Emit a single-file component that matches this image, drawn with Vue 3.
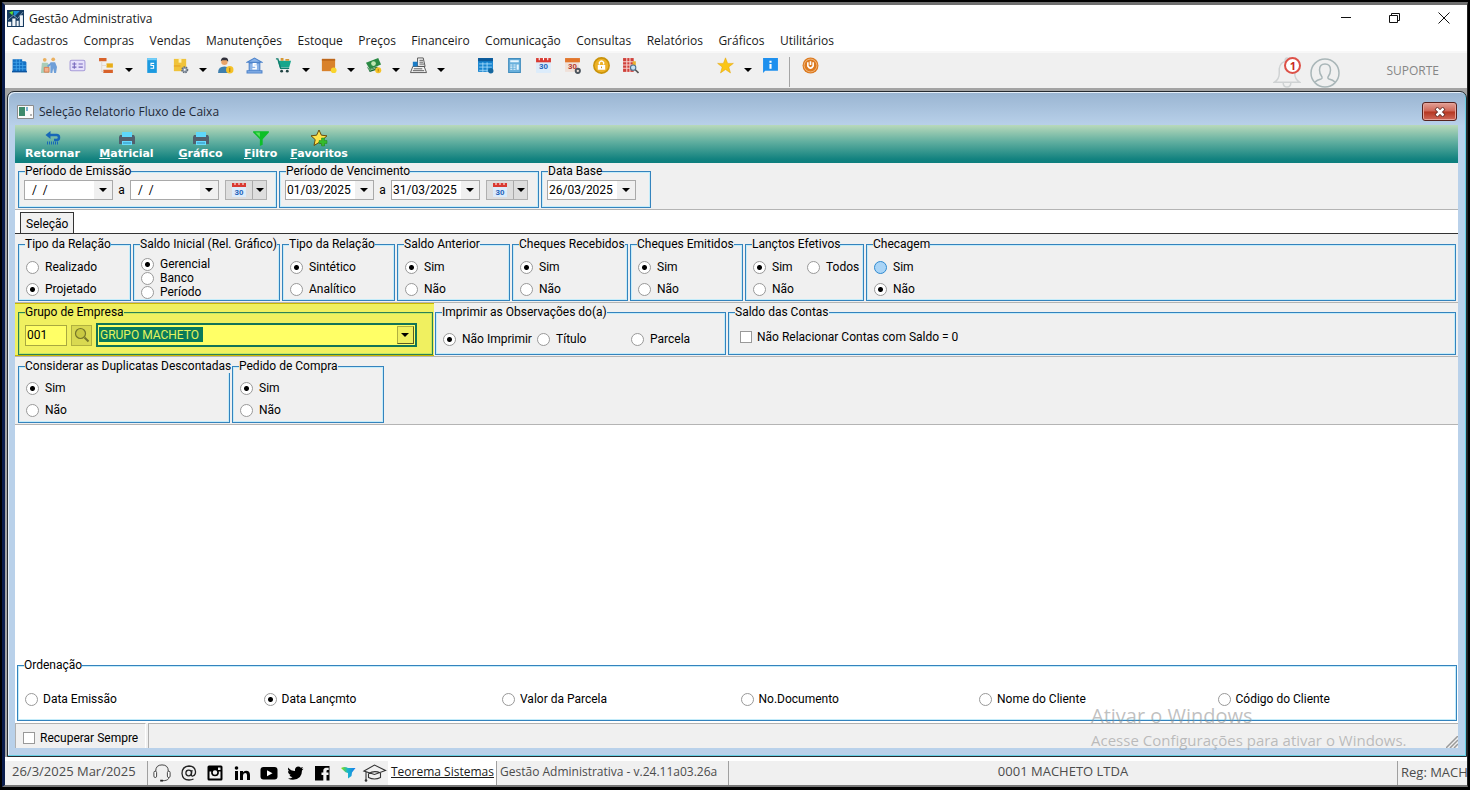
<script setup>
import { ref } from 'vue'

const menus = ['Cadastros', 'Compras', 'Vendas', 'Manutenções', 'Estoque', 'Preços', 'Financeiro', 'Comunicação', 'Consultas', 'Relatórios', 'Gráficos', 'Utilitários']

const toolGroups = [
  [
    { icon: 'building', label: 'Empresas' },
    { icon: 'people', label: 'Pessoas' },
    { icon: 'card', label: 'Cartões' },
    { icon: 'tree', label: 'Plano de contas', drop: true },
    { icon: 'ledger', label: 'Títulos' },
    { icon: 'box', label: 'Produtos', drop: true },
    { icon: 'client', label: 'Clientes' },
    { icon: 'bank', label: 'Bancos' },
    { icon: 'cart', label: 'Vendas', drop: true },
    { icon: 'package', label: 'Pedidos', drop: true },
    { icon: 'cash', label: 'Caixa', drop: true },
    { icon: 'register', label: 'Frente de caixa', drop: true }
  ],
  [
    { icon: 'agenda', label: 'Agenda' },
    { icon: 'calc', label: 'Calculadora' },
    { icon: 'cal', label: 'Calendário', num: 'blue' },
    { icon: 'calgear', label: 'Configurar calendário', num: 'red' },
    { icon: 'lock', label: 'Bloquear' },
    { icon: 'search-sheet', label: 'Pesquisar' }
  ],
  [
    { icon: 'star', label: 'Favoritos', drop: true },
    { icon: 'info', label: 'Informações' }
  ]
]

const actions = [
  { icon: 'back', key: '', text: 'Retornar' },
  { icon: 'print', key: 'M', text: 'atricial' },
  { icon: 'print', key: 'G', text: 'ráfico' },
  { icon: 'funnel', key: 'F', text: 'iltro', narrow: true },
  { icon: 'favadd', key: 'F', text: 'avoritos', narrow: true }
]

const periods = [
  { title: 'Período de Emissão', cls: 'w-emissao', dates: ['  /  /', '  /  /'] },
  { title: 'Período de Vencimento', cls: 'w-venc', dates: ['01/03/2025', '31/03/2025'] },
  { title: 'Data Base', cls: 'w-base', dates: ['26/03/2025'] }
]

const rowOne = ref([
  { id: 'tipo', title: 'Tipo da Relação', cls: 'w-a', options: ['Realizado', 'Projetado'], value: 'Projetado' },
  { id: 'saldo', title: 'Saldo Inicial (Rel. Gráfico)', cls: 'w-b tight', options: ['Gerencial', 'Banco', 'Período'], value: 'Gerencial' },
  { id: 'forma', title: 'Tipo da Relação', cls: 'w-a', options: ['Sintético', 'Analítico'], value: 'Sintético' },
  { id: 'anterior', title: 'Saldo Anterior', cls: 'w-a', options: ['Sim', 'Não'], value: 'Sim' },
  { id: 'recebidos', title: 'Cheques Recebidos', cls: 'w-c', options: ['Sim', 'Não'], value: 'Sim' },
  { id: 'emitidos', title: 'Cheques Emitidos', cls: 'w-a', options: ['Sim', 'Não'], value: 'Sim' },
  { id: 'efetivos', title: 'Lançtos Efetivos', cls: 'w-d pair', options: ['Sim', 'Todos', 'Não'], value: 'Sim' },
  { id: 'checagem', title: 'Checagem', cls: 'grow', options: ['Sim', 'Não'], value: 'Não', hot: 'Sim' }
])

const rowThree = ref([
  { id: 'duplicatas', title: 'Considerar as Duplicatas Descontadas', cls: 'w-dup', options: ['Sim', 'Não'], value: 'Sim' },
  { id: 'pedido', title: 'Pedido de Compra', cls: 'w-ped', options: ['Sim', 'Não'], value: 'Sim' }
])

const obs = ref('Não Imprimir')
const order = ref('Data Lançmto')
const orders = ['Data Emissão', 'Data Lançmto', 'Valor da Parcela', 'No.Documento', 'Nome do Cliente', 'Código do Cliente']
const group = ref('001')
const social = ['headset', 'at', 'instagram', 'linkedin', 'youtube', 'twitter', 'facebook', 'teorema', 'cap']
</script>

<template>
  <svg class="defs" aria-hidden="true">
    <defs>
      <linearGradient id="tgrad" x1="0" x2="1"><stop offset="0" stop-color="#8de000" /><stop offset=".45" stop-color="#19b8c8" /><stop offset="1" stop-color="#1878f0" /></linearGradient>
    </defs>
    <symbol id="i-building" viewBox="0 0 16 16"><path fill="#1471c4" d="M1.500 2h9v2h3l1 1v9h-13z" /><path stroke="#45a7ee" stroke-width=".7" d="M2 5h8M2 8h12M2 11h12M5 2v12M8 2v12M11 5v9" fill="none" /><path fill="#0c55a0" d="M1 13h14v1.500H1z" /></symbol>
    <symbol id="i-people" viewBox="0 0 18 18"><circle cx="5" cy="3" r="2" fill="#eab060" /><circle cx="14" cy="2.500" r="2" fill="#eab060" /><path fill="#a9cdb9" d="M2 6h6l2 3v8H1z" /><path fill="#6f9fd8" d="M11 5.500h5l2 5-1 6.500h-2l-1-5-1 5h-2z" /><path fill="#f3b08c" stroke="#d97e52" d="M4.500 11h5v5h-5z" /><path d="M8 10l4-3" stroke="#6f9fd8" stroke-width="2" /></symbol>
    <symbol id="i-card" viewBox="0 0 16 16"><rect x="1" y="3" width="14" height="10" rx="1.500" fill="#e6e0fb" stroke="#a79bd8" /><path stroke="#7767bb" d="M3 6.500h4M3 9.500h4M9 6.500h4M9 9.500h4M5 5v6" /></symbol>
    <symbol id="i-tree" viewBox="0 0 16 16"><path fill="#d8622a" d="M1 1h7v3H1zM5 12h9v3H5z" /><path fill="#e8ad18" d="M8 6h6v4H8z" /><path d="M3.500 4v9.500H5M3.500 8H8" fill="none" stroke="#e2d8d2" /></symbol>
    <symbol id="i-ledger" viewBox="0 0 16 16"><path fill="#1b9ae0" d="M4 1h9v14H4z" /><path fill="#74cef8" d="M4 1h9v2H4z" /><path d="M10.500 6H7.500v2H10v2.500H7" fill="none" stroke="#fff" /></symbol>
    <symbol id="i-box" viewBox="0 0 18 18"><path fill="#f0c33a" d="M2 2h13v13H2z" /><path fill="#fff2b5" d="M7 2h3v4H7z" /><path fill="#e39b20" d="M2 9h7v1H2z" /><circle cx="13.500" cy="13.500" r="3" fill="#8f9ba8" stroke="#626d7c" stroke-width="1.500" stroke-dasharray="1.500 1" /><circle cx="13.500" cy="13.500" r="1" fill="#fff" /></symbol>
    <symbol id="i-client" viewBox="0 0 16 16"><circle cx="7" cy="4.500" r="3" fill="#eaa468" /><path fill="#31313b" d="M3.500 4Q4 0 7 .500q4 0 3.500 4L9 3H5z" /><path fill="#3e7fae" d="M1 15q0-6 6-6t6 6z" /><circle cx="12" cy="12" r="3.500" fill="#f5c228" /><path stroke="#b17d08" d="M12 10v4" /></symbol>
    <symbol id="i-bank" viewBox="0 0 16 16"><path fill="#8bb3e8" stroke="#4e84cb" d="M1 5l7-4 7 4zM3 5.500h10V13H3zM1 13h14v2H1z" /><path fill="none" stroke="#fff" stroke-width="1.500" d="M10 6.500H7v2h2.500v2.500H6" /></symbol>
    <symbol id="i-cart" viewBox="0 0 18 18"><path fill="#18a68c" d="M3 4h14l-2 7H5z" /><path d="M1 2h2l3 10h9" stroke="#147e6e" fill="none" stroke-width="1.500" /><path fill="#d69834" d="M6 1h3v3H6zM11 2h4v2h-4z" /><circle cx="7" cy="15" r="1.500" fill="#244" /><circle cx="13" cy="15" r="1.500" fill="#244" /></symbol>
    <symbol id="i-package" viewBox="0 0 18 18"><path fill="#d9822b" d="M2 2h14v13H2z" /><path fill="#bd671b" d="M2 2h14v2H2z" /><circle cx="14.500" cy="14" r="3" fill="#f9d52d" /></symbol>
    <symbol id="i-cash" viewBox="0 0 18 18"><path fill="#2b8a44" d="M1 6l13-5 3 7-12 5z" /><path fill="#176431" d="M2 10l3 6 9-3-1-3-8 3z" /><circle cx="9" cy="7" r="2.500" fill="#c0e6b2" /><path stroke="#9bd39b" d="M3 12l2 2 6-2" fill="none" /><circle cx="14" cy="14" r="3.200" fill="#f5c228" /><path stroke="#b17d08" d="M14 12.500v3" /></symbol>
    <symbol id="i-register" viewBox="0 0 18 18"><path fill="#f6f6f6" stroke="#555" d="M8 1h6l2 9H8zM3 10h12l2.500 6.500H.5z" /><path d="M10 3.500h4M10 5.500h4M10 7.500h5M4 12.500h9M3 14.500h12" stroke="#555" /><path fill="#1a7cc7" d="M3 5h5v5H3z" /></symbol>
    <symbol id="i-agenda" viewBox="0 0 16 16"><path fill="#1684cf" d="M1 1h14v13H1z" /><path fill="#0c5a9a" d="M1 1h14v3H1z" /><path stroke="#a8dcfb" stroke-width=".8" d="M2 6.500h12M2 9.500h12M2 12.500h8M5.500 5v9M9.500 5v9" /><circle cx="13" cy="13" r="2.500" fill="#15679f" /></symbol>
    <symbol id="i-calc" viewBox="0 0 16 16"><path fill="#69b0dc" stroke="#408cbd" d="M2.500 1.500h11v13h-11z" /><path fill="#e8f6ff" d="M4 3h8v2H4zM4 7h2v1H4zM7 7h2v1H7zM4 9h2v1H4zM7 9h2v1H7zM4 11h2v1H4zM7 11h2v1H7zM10 7h2v5h-2z" /></symbol>
    <symbol id="i-cal" viewBox="0 0 16 16"><path fill="#dcecfb" d="M1 2h14v13H1z" /><path fill="#d93a32" d="M1 1h14v4H1z" /><path stroke="#fff" d="M4 1v2M8 1v2M12 1v2" /></symbol>
    <symbol id="i-calgear" viewBox="0 0 16 16"><path fill="#f0e0d8" d="M1 2h13v12H1z" /><path fill="#e2762b" d="M1 1h14v4H1z" /><circle cx="13" cy="13" r="2" fill="none" stroke="#4b545d" stroke-width="1.800" /></symbol>
    <symbol id="i-lock" viewBox="0 0 16 16"><circle cx="8" cy="8" r="7.200" fill="#edb125" stroke="#c9930b" stroke-width="1.500" /><path fill="#fff" d="M4.500 7.500h7V12h-7z" /><path d="M6 7V5q2-2.500 4 0v2" stroke="#fff" stroke-width="1.300" fill="none" /><path d="M8 9v1.500" stroke="#d59a17" /></symbol>
    <symbol id="i-search-sheet" viewBox="0 0 16 16"><path fill="#cf403a" d="M1 1h10v13H1z" /><path stroke="#f8d0cc" d="M1 4.500h10M1 7.500h10M1 10.500h10M4.500 1v13M7.500 1v13" /><path fill="#eab12e" d="M10 4h3v4h-3z" /><circle cx="10.500" cy="10" r="2.500" fill="#c5e2f5" stroke="#4c718e" /><path d="M12.500 12l3 3" stroke="#555" stroke-width="1.500" /></symbol>
    <symbol id="i-star" viewBox="0 0 16 16"><path fill="#fbc614" stroke="#e5a50a" stroke-width=".5" d="M8 .800l2 5.200h5.400l-4.300 3.400 1.600 5.600L8 11.800 3.300 15l1.600-5.600L.600 6H6z" /></symbol>
    <symbol id="i-info" viewBox="0 0 16 16"><path fill="#1e90ee" d="M1 1h14v12H3l-2 2z" /><path fill="#fff" d="M7 3.500h2v2H7zM7 6.500h2V11H7z" /></symbol>
    <symbol id="i-power" viewBox="0 0 16 16"><circle cx="8" cy="8" r="7.500" fill="#dc7a20" /><circle cx="8" cy="8" r="6" fill="none" stroke="#f3bd85" stroke-width=".8" /><path d="M5.500 5v3.500q2.500 4 5 0V5M8 4v3.500" fill="none" stroke="#fff" stroke-width="1.500" /></symbol>
    <symbol id="i-back" viewBox="0 0 18 18"><path d="M4 6h8.500q2.500 0 2.500 2.500T12.500 11H10" fill="none" stroke="#1767b8" stroke-width="2.500" /><path fill="#1767b8" d="M6.500 2v8L1.500 6z" /><path d="M3 14h11" stroke="#1767b8" stroke-width="3" stroke-dasharray="1 1" /></symbol>
    <symbol id="i-print" viewBox="0 0 18 18"><path fill="#5fd7fa" d="M4 3h10v5H4z" /><path fill="#52606e" d="M2 6h2v2h10V6h2l1 2v7H1V8z" /><path fill="#67dcff" d="M4 12h10v4H4z" /><path stroke="#2c8ab8" d="M5 14h8" /></symbol>
    <symbol id="i-funnel" viewBox="0 0 16 16"><path fill="#0cbf28" d="M1 2h14v1l-5.500 6v5L7 15V9L1 3z" /><path fill="#5be05f" d="M3 3h4v4z" /></symbol>
    <symbol id="i-favadd" viewBox="0 0 18 18"><path fill="#ffe34a" stroke="#6b4b0b" d="M9 1l2.400 5.200 5.600.600-4.200 3.800L14 16.500 9 13.500l-5 3 1.200-5.900L1 6.800l5.600-.600z" /><path fill="#35bb2c" stroke="#1d8718" stroke-width=".5" d="M11.500 9h3v2.500H17v3h-2.500V17h-3v-2.500H9v-3h2.500z" /></symbol>
    <symbol id="i-lens" viewBox="0 0 16 16"><circle cx="6.500" cy="6.500" r="5" fill="#c9c942" stroke="#77772a" stroke-width="1.200" /><path d="M10.500 10.500l4 4" stroke="#77772a" stroke-width="2" /></symbol>
    <symbol id="i-headset" viewBox="0 0 20 20"><path d="M3 8q0-7 7-7t7 7" fill="none" stroke="#333" /><rect x="1" y="8" width="3" height="7" rx="1.500" fill="#fff" stroke="#333" /><rect x="16" y="8" width="3" height="7" rx="1.500" fill="#fff" stroke="#333" /><path d="M17.500 15q0 3-5 3.500H10" fill="none" stroke="#333" /><path d="M8 18.500h3" stroke="#222" stroke-width="2" /></symbol>
    <symbol id="i-at" viewBox="0 0 18 18"><circle cx="8.700" cy="9" r="2.800" fill="none" stroke="#222" stroke-width="1.300" /><path d="M12 6l-.700 4.500q0 1.800 1.500 1.500 3-1 2.700-4.500Q14.800 2 9 2 2 2.500 2 9.500 2.500 16 9 16q2.500 0 4.500-1" fill="none" stroke="#222" stroke-width="1.300" /></symbol>
    <symbol id="i-instagram" viewBox="0 0 18 18"><rect x="1.500" y="1.500" width="15" height="15" rx="1.500" /><path fill="#f0f0f0" d="M3.500 7.500h2q-.5 4.500 3.500 4.500t3.500-4.500h2v7h-11zM12 3.500h2.500V6H12z" /><circle cx="9" cy="8.500" r="3" fill="#f0f0f0" stroke="#000" stroke-width="1.500" /></symbol>
    <symbol id="i-linkedin" viewBox="0 0 18 18"><circle cx="3.500" cy="4" r="1.800" /><path d="M2 7h3v9H2zM7 7h3v1.300Q11 6.700 13 6.700q4 0 4 4.300v5h-3v-5q0-2-1.800-2-2.200 0-2.200 2.500V16H7z" /></symbol>
    <symbol id="i-youtube" viewBox="0 0 18 18"><rect x=".5" y="3" width="17" height="12.500" rx="3" /><path fill="#fff" d="M7 6.200l5.500 3L7 12.300z" /></symbol>
    <symbol id="i-twitter" viewBox="0 0 18 18"><path d="M2 3.500q3 3.500 7 3.500-.500-4 3-4.500 1.800 0 2.800 1.200L17 3l-1.200 2L17.500 4.800 16 6.500Q16 15.500 7 15.800q-3 0-5-1.300 3 0 4.500-1.200Q4 13 3.500 11H5Q2 10 2 7l1.500.500Q1.500 6 2 3.500z" /></symbol>
    <symbol id="i-facebook" viewBox="0 0 18 18"><path fill-rule="evenodd" d="M2 2h14.500v14.500h-3V11h2V8.500h-2V7q0-1 1-1h1.200V3.700H13q-2.700.300-2.700 3v1.800H8.500V11h1.800v5.500H2z" /></symbol>
    <symbol id="i-teorema" viewBox="0 0 18 18"><path fill="url(#tgrad)" d="M2 4q4-2 7 0h7.500l-3.500 4.500-.500 3.500-3.500 2.500V9L6.500 8.300z" /></symbol>
    <symbol id="i-cap" viewBox="0 0 24 20"><path d="M1.500 8L12 2l11 5.500-11 4zM6 10.500v4q6 3 12 0v-4.500M6 10.500q6-3.500 12-.500M3.500 9v8" fill="none" stroke="#333" stroke-width="1.100" /><circle cx="3.500" cy="17.500" r="1.300" fill="#333" /></symbol>
    <symbol id="i-app" viewBox="0 0 16 16"><path fill="#163a5f" d="M0 0h16v16H0z" /><path fill="#5ee02c" d="M2 2l4-1-1 4z" /><path fill="#1d8fd8" d="M6 1h6L7 6z" /><path fill="#f2f6fa" d="M1 11h3v4H1zM5 8h3v7H5zM9 10h2v5H9zM12 5h3v10h-3z" /><path d="M1 9l5-4 4 3 5-6" stroke="#9db4c8" stroke-width=".7" fill="none" /></symbol>
    <symbol id="i-form" viewBox="0 0 17 14"><path fill="#fafafa" stroke="#8c8c8c" d="M.5.500h16v13H.5z" /><path fill="#3e8a6c" d="M2 2h6v9H2z" /><path fill="#7ab2d0" d="M9 2h2v4H9z" /><path fill="#b3b3b3" d="M13 9h2v2h-2z" /></symbol>
  </svg>

  <div class="desktop">
    <div class="app-window">
      <header class="titlebar">
        <svg class="app-icon"><use href="#i-app" /></svg>
        <h1>Gestão Administrativa</h1>
        <div class="win-buttons">
          <button type="button" aria-label="Minimizar"><svg viewBox="0 0 12 12"><path d="M1 5.500h10" /></svg></button>
          <button type="button" aria-label="Restaurar"><svg viewBox="0 0 12 12"><path d="M.5 3.500h8v7h-8zM2.500 3.500v-2h8v7h-2" /></svg></button>
          <button type="button" aria-label="Fechar"><svg viewBox="0 0 12 12"><path d="M.5.500l11 11M11.500.500l-11 11" /></svg></button>
        </div>
      </header>

      <nav class="menubar">
        <div class="menus"><a v-for="m in menus" :key="m" href="#">{{ m }}</a></div>
      </nav>

      <div class="toolbar">
        <div v-for="(g, gi) in toolGroups" :key="gi" class="tool-group">
          <template v-for="t in g" :key="t.icon">
            <button type="button" class="tool" :aria-label="t.label"><svg><use :href="'#i-' + t.icon" /></svg><b v-if="t.num" class="day" :class="t.num">30</b></button>
            <button v-if="t.drop" type="button" class="tool-drop" :aria-label="'Opções de ' + t.label"><i class="arrow"></i></button>
          </template>
        </div>
        <span class="tool-sep"></span>
        <button type="button" class="tool" aria-label="Sair"><svg><use href="#i-power" /></svg></button>
        <div class="account">
          <button type="button" class="bell" aria-label="Notificações">
            <svg viewBox="0 0 28 32" fill="none" stroke="#cfd2d3" stroke-width="1.500"><path d="M1 26q5-3 5-9v-5q1-7 8-8 7 1 8 8v5q0 6 5 9zM10 26q0 5 4 5t4-5M12 4q0-3 2-3t2 3" /></svg>
            <span class="badge">1</span>
          </button>
          <svg class="avatar" viewBox="0 0 30 30" fill="none" stroke="#a9b6b8" stroke-width="1.500"><circle cx="15" cy="15" r="14" /><path d="M5 24q2-2 6-3 1.500-.500 1-2-2.500-3-2.500-7Q9.500 6 15 6t5.500 6q0 4-2.500 7-.500 1.500 1 2 4 1 6 3" /></svg>
          <span class="user">SUPORTE</span>
        </div>
      </div>

      <main class="mdi">
        <section class="child">
          <header class="child-title">
            <svg class="form-icon"><use href="#i-form" /></svg>
            <h2>Seleção Relatorio Fluxo de Caixa</h2>
            <button type="button" class="child-close" aria-label="Fechar janela"><svg viewBox="0 0 12 10"><path d="M2 1l8 8M10 1L2 9" stroke="#5a2620" stroke-width="4" /><path d="M2.500 1.500l7 7M9.500 1.500l-7 7" stroke="#fff" stroke-width="2.500" /></svg></button>
          </header>

          <div class="child-body">
            <div class="actions">
              <button v-for="(a, i) in actions" :key="i" type="button" :class="{ narrow: a.narrow }"><svg><use :href="'#i-' + a.icon" /></svg><span><u>{{ a.key }}</u>{{ a.text }}</span></button>
            </div>

            <div class="band periods">
              <fieldset v-for="p in periods" :key="p.title" :class="p.cls">
                <legend>{{ p.title }}</legend>
                <div class="dates">
                  <template v-for="(d, i) in p.dates" :key="i">
                    <span v-if="i" class="to">a</span>
                    <span class="date"><input type="text" :value="d" :aria-label="p.title + ' ' + (i + 1)"><button type="button" aria-label="Abrir calendário"><i class="arrow"></i></button></span>
                  </template>
                  <span v-if="p.dates.length > 1" class="split">
                    <button type="button" aria-label="Escolher período"><svg><use href="#i-cal" /></svg><b class="day blue">30</b></button><button type="button" aria-label="Mais períodos"><i class="arrow"></i></button>
                  </span>
                </div>
              </fieldset>
            </div>

            <div class="tabs"><button type="button">Seleção</button></div>

            <div class="band first">
              <fieldset v-for="f in rowOne" :key="f.id" :class="f.cls">
                <legend>{{ f.title }}</legend>
                <div class="opts">
                  <label v-for="o in f.options" :key="o"><input v-model="f.value" type="radio" :name="f.id" :value="o" :class="{ hot: f.hot === o }">{{ o }}</label>
                </div>
              </fieldset>
            </div>

            <div class="band second">
              <div class="marked">
                <fieldset>
                  <legend>Grupo de Empresa</legend>
                  <div class="company">
                    <input v-model="group" type="text" aria-label="Código do grupo">
                    <button type="button" aria-label="Pesquisar grupo"><svg><use href="#i-lens" /></svg></button>
                    <span class="combo"><select aria-label="Grupo de empresa"><option>GRUPO MACHETO</option></select><i class="arrow"></i></span>
                  </div>
                </fieldset>
              </div>
              <fieldset class="w-obs">
                <legend>Imprimir as Observações do(a)</legend>
                <div class="obs">
                  <label v-for="o in ['Não Imprimir', 'Título', 'Parcela']" :key="o"><input v-model="obs" type="radio" name="obs" :value="o">{{ o }}</label>
                </div>
              </fieldset>
              <fieldset class="grow">
                <legend>Saldo das Contas</legend>
                <div class="accounts"><label><input type="checkbox">Não Relacionar Contas com Saldo = 0</label></div>
              </fieldset>
            </div>

            <div class="band third">
              <fieldset v-for="f in rowThree" :key="f.id" :class="f.cls">
                <legend>{{ f.title }}</legend>
                <div class="opts">
                  <label v-for="o in f.options" :key="o"><input v-model="f.value" type="radio" :name="f.id" :value="o">{{ o }}</label>
                </div>
              </fieldset>
            </div>

            <div class="blank"></div>

            <fieldset class="ordering">
              <legend>Ordenação</legend>
              <div class="orders">
                <label v-for="o in orders" :key="o"><input v-model="order" type="radio" name="order" :value="o">{{ o }}</label>
              </div>
            </fieldset>

            <footer class="child-status">
              <div class="keep"><label><input type="checkbox">Recuperar Sempre</label></div>
              <div class="fill"><svg viewBox="0 0 12 12" fill="none" stroke="#9a9a9a" stroke-width="1.500"><path d="M0 12L12 0M4 12l8-8M8 12l4-4" /></svg></div>
            </footer>
          </div>
        </section>
        <aside class="watermark"><p>Ativar o Windows</p><p>Acesse Configurações para ativar o Windows.</p></aside>
      </main>

      <footer class="status">
        <span class="today">26/3/2025 Mar/2025</span>
        <span class="social"><a v-for="s in social" :key="s" href="#" :aria-label="s" :class="s"><svg><use :href="'#i-' + s" /></svg></a></span>
        <a class="site" href="#">Teorema Sistemas</a>
        <span class="version">Gestão Administrativa - v.24.11a03.26a</span>
        <span class="firm">0001 MACHETO LTDA</span>
        <span class="reg">Reg: MACH</span>
      </footer>
    </div>
  </div>
</template>

<style>
html, body { margin: 0; background: #000; }
</style>

<style scoped>
* { box-sizing: border-box; }
.defs { position: absolute; width: 0; height: 0; }
button { margin: 0; padding: 0; border: 0; background: none; font: inherit; color: inherit; }
h1, h2, p { margin: 0; font-weight: 400; }
a { color: inherit; text-decoration: none; }

.desktop { display: flex; min-height: 100vh; padding: 2px 2px 3px; background: #000; }
.app-window {
  display: flex; flex: 1; flex-direction: column; min-width: 0;
  border: solid; border-width: 3px 1px 2px 3px; border-color: #6e6e6e #222 #777 #0a1c4c;
  background: #f0f0f0; color: #1a1a1a; font: 12px "Open Sans", "Noto Sans", sans-serif;
}
.arrow { display: block; width: 0; height: 0; border: 4px solid transparent; border-top-color: #000; border-bottom: 0; }

.titlebar { display: flex; align-items: center; height: 26px; padding: 0 16px 0 2px; background: #fff; }
.app-icon { width: 17px; height: 17px; margin-right: 5px; }
h1 { font-size: 12px; }
.win-buttons { display: flex; gap: 35px; margin-left: auto; }
.win-buttons svg { display: block; width: 12px; height: 12px; fill: none; stroke: #111; }
.win-buttons button { padding: 0 1px; }
.menubar { height: 20px; padding-left: 7px; background: #fff; line-height: 20px; }
.menus { display: flex; justify-content: space-between; max-width: 822px; }

.toolbar { display: flex; align-items: flex-start; height: 37px; padding-top: 4px; border-top: 2px solid #f8f8f8; }
.tool-group { display: flex; margin-right: 22px; }
.tool-group + .tool-group { margin-right: 66px; }
.tool-group + .tool-group + .tool-group { margin-right: 4px; }
.tool { position: relative; display: flex; justify-content: center; width: 29px; height: 18px; }
.tool svg { width: 17px; height: 17px; }
.day { position: absolute; top: 5px; right: 0; left: 0; color: #2161b8; font: bold 8px/10px "Liberation Sans", sans-serif; text-align: center; }
.day.red { color: #b8392b; }
.tool-drop { display: flex; align-items: flex-end; justify-content: center; width: 16px; height: 17px; padding-bottom: 2px; }
.tool-sep { width: 1px; height: 30px; margin-right: 6px; background: #a5a5a5; }
.account { display: flex; align-items: center; margin-left: auto; padding-right: 28px; }
.bell { position: relative; width: 28px; height: 31px; margin-right: 9px; }
.bell svg { display: block; width: 28px; height: 31px; }
.badge { position: absolute; top: 0; right: 0; width: 17px; height: 17px; border: 2px solid #dd5148; border-radius: 50%; background: #fff; color: #c8281e; font-weight: 700; font-size: 11px; line-height: 13px; }
.avatar { width: 30px; height: 30px; margin-right: 46px; }
.user { padding-bottom: 4px; color: #868686; font-size: 12px; }

.mdi { position: relative; display: flex; flex: 1; padding: 3px 0 0 2px; background: #a3a3a3; }
.child { display: flex; flex: 1; flex-direction: column; min-width: 0; border: 1px solid #262b30; border-radius: 7px 7px 0 0; box-shadow: inset -1px -1px #65cfe4, inset 1px 1px #e4eef8; background: linear-gradient(#99b4d1, #b9d1ea 34px, #b9d1ea); padding: 0 8px 8px 7px; }
.child-title { display: flex; align-items: center; height: 33px; padding: 6px 1px 0 2px; color: #1f2a38; }
.form-icon { width: 17px; height: 14px; margin-right: 5px; }
h2 { font-size: 12px; }
.child-close { display: flex; align-items: center; justify-content: center; width: 35px; height: 19px; margin-left: auto; border: 1px solid #57221e; border-radius: 3px; box-shadow: inset 0 0 0 1px #e5a49a; background: linear-gradient(#e2a096, #cf6656 48%, #b43620 52%, #d0695a); }
.child-close svg { width: 12px; height: 10px; }
.child-body { display: flex; flex: 1; flex-direction: column; background: #fff; color: #000; font: 12px/14px "Roboto", "Liberation Sans", sans-serif; }

.actions { display: flex; gap: 13px; height: 38px; padding: 4px 7px 0; background: linear-gradient(#b9d9bb, #5fae9f 45%, #12827f 90%, #0c7e7d); color: #fff; font: bold 11px/14px "DejaVu Sans", sans-serif; }
.actions button { display: flex; flex-direction: column; align-items: center; min-width: 61px; }
.actions .narrow { min-width: 0; }
.actions svg { width: 18px; height: 18px; }

.band { display: flex; gap: 2px; padding: 2px 2px 1px 3px; border-bottom: 1px solid #b4b4b4; background: #f0f0f0; }
.band.periods { padding-top: 1px; padding-bottom: 1px; }
.band.first { padding-top: 3px; }
fieldset { --c: #f0f0f0; flex: none; min-width: 0; margin: 0; padding: 0; border: 1px solid #3483bd; box-shadow: inset 0 0 0 1px #c4ecfa; }
legend { margin-left: 6px; padding: 0; background: var(--c); line-height: 14px; white-space: nowrap; }
.w-emissao { width: 259px; }
.w-venc { width: 260px; }
.w-base { width: 110px; }
.w-a { width: 113px; }
.w-b { width: 147px; }
.w-c { width: 116px; }
.w-d { width: 119px; }
.w-dup { width: 212px; }
.w-ped { width: 152px; }
.w-obs { width: 291px; }
.grow { flex: 1; }

.dates { display: flex; align-items: center; padding: 2px 5px 7px; }
.date { display: flex; width: 89px; height: 20px; border: 1px solid #a9a9a9; background: #fff; }
.date input { flex: 1; min-width: 0; padding: 0 0 0 1px; border: 0; background: none; font: inherit; white-space: pre; }
.date button { display: flex; align-items: center; justify-content: center; width: 18px; background: #f0f0f0; }
.to { width: 17px; text-align: center; }
.split { display: flex; height: 20px; margin-left: 6px; border: 1px solid #b0b0b0; background: #dedede; }
.split button { position: relative; display: flex; align-items: center; justify-content: center; width: 26px; }
.split button + button { width: 14px; border-left: 1px solid #a9a9a9; }
.split svg { width: 16px; height: 16px; }
.split .day { top: 7px; }

.tabs { display: flex; align-items: flex-end; height: 24px; padding-left: 5px; border-bottom: 1px solid #333; background: #fff; }
.tabs button { height: 21px; padding: 1px 5px 0; border: 1px solid #333; border-bottom: 0; background: #f0f0f0; }

label { display: flex; align-items: center; white-space: nowrap; }
input[type="radio"], input[type="checkbox"] { flex: none; width: 13px; height: 13px; margin: 0 6px 0 0; border: 1px solid #999; background: #fff; appearance: none; }
input[type="radio"] { border-radius: 50%; }
input[type="checkbox"] { width: 12px; height: 12px; margin-right: 5px; }
input[type="radio"]:checked { background: radial-gradient(circle, #000 0 2px, #fff 3px); }
input[type="radio"].hot { border-color: #2f8ad0; background: #a9d4f6; }
.opts { padding: 5px 0 0 7px; }
.opts label { height: 22px; }
.tight .opts { padding-top: 6px; }
.tight label { height: 14px; }
.pair .opts { display: grid; grid-template-columns: 54px 1fr; }
.third .opts { padding: 4px 0 1px 7px; }

.second { padding-top: 0; padding-left: 0; }
.marked { margin-right: -1px; padding: 2px 1px 1px 3px; margin-bottom: -1px; background: #f0f060; box-shadow: inset 0 1px #c9b800, inset 0 -1px #c9b800; }
.marked fieldset { --c: #f0f060; width: 415px; border-color: #2c8054; box-shadow: inset 0 0 0 1px #c4e862; }
.second > fieldset { margin-top: 2px; }
.company { display: flex; align-items: center; gap: 4px; padding: 4px 6px 7px; }
.company input { width: 42px; height: 21px; padding: 0 1px; border: 1px solid #a8a840; background: #ffff66; font: inherit; }
.company button { display: flex; align-items: center; justify-content: center; width: 21px; height: 21px; border: 1px solid #b0b03f; background: #d9d951; }
.company svg { width: 16px; height: 16px; }
.combo { position: relative; width: 321px; height: 24px; border: 2px solid #127456; background: #ffff66; }
.combo select { display: block; width: 100%; height: 20px; padding: 0 2px; border: 0; outline: 0; appearance: none; background: linear-gradient(#0a7a5a, #0a7a5a) 1px 2px / 104px 15px no-repeat; color: #e4f45e; font: inherit; }
.combo .arrow { position: absolute; top: 1px; right: 1px; width: 17px; height: 18px; border: 1px outset #b0b040; background: #f0f060; }
.combo .arrow::after { position: absolute; top: 6px; left: 3px; content: ""; border: 4px solid transparent; border-top-color: #000; border-bottom: 0; }
.obs { display: grid; grid-template-columns: repeat(3, 94px); padding: 13px 0 0 7px; }
.accounts { padding: 11px 0 0 11px; }
.blank { flex: 1; }
.ordering { --c: #fff; margin: 0 1px 2px 2px; }
.orders { display: grid; grid-template-columns: repeat(6, 1fr); padding: 20px 0 14px 7px; }
.orders input[type="radio"] { margin-right: 5px; }
.child-status { display: flex; gap: 2px; height: 25px; background: #f0f0f0; }
.keep { display: flex; align-items: center; width: 131px; padding-left: 7px; border: solid #b0b0b0; border-width: 1px 0 0 1px; border-right: 1px solid #fff; padding-top: 4px; }
.fill { display: flex; flex: 1; align-items: flex-end; justify-content: flex-end; border: solid #b0b0b0; border-width: 1px 0 0 1px; }
.fill svg { width: 12px; height: 12px; }
.watermark { position: absolute; right: 54px; bottom: 5px; width: 322px; color: rgba(140, 140, 140, .55); font-size: 15px; line-height: 24px; white-space: nowrap; pointer-events: none; }
.watermark p:first-child { font-size: 20px; line-height: 24px; }

.status { display: flex; height: 28px; border-top: 4px solid #fff; color: #4c4c4c; line-height: 22px; white-space: nowrap; }
.status > * { border-right: 1px solid #a0a0a0; }
.today { width: 143px; padding-left: 7px; font-size: 13px; line-height: 20px; }
.social { display: flex; align-items: center; width: 240px; padding-left: 1px; border-right: 0; }
.social a { width: 27px; height: 20px; text-align: center; }
.social svg { width: 18px; height: 20px; }
.social .cap svg { width: 25px; }
.site { width: 109px; padding-left: 3px; background: #fff; color: #1a1a1a; text-decoration: underline; }
.version { width: 232px; padding-left: 3px; }
.firm { flex: 1; text-align: center; font-size: 13px; line-height: 20px; }
.reg { width: 69px; padding-left: 3px; border-right: 0; font-size: 13px; }
</style>
